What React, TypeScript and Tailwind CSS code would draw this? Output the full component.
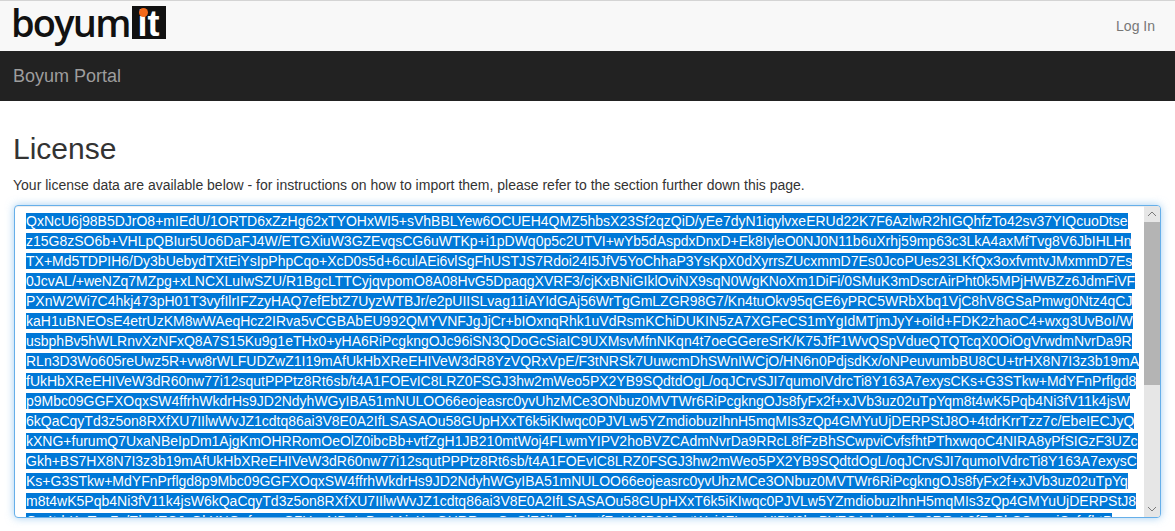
const lines = [
  "QxNcU6j98B5DJrO8+mIEdU/1ORTD6xZzHg62xTYOHxWI5+sVhBBLYew6OCUEH4QMZ5hbsX23Sf2qzQiD/yEe7dyN1iqylvxeERUd22K7F6AzlwR2hIGQhfzTo42sv37YIQcuoDtse",
  "z15G8zSO6b+VHLpQBIur5Uo6DaFJ4W/ETGXiuW3GZEvqsCG6uWTKp+i1pDWq0p5c2UTVI+wYb5dAspdxDnxD+Ek8IyleO0NJ0N11b6uXrhj59mp63c3LkA4axMfTvg8V6JbIHLHn",
  "TX+Md5TDPIH6/Dy3bUebydTXtEiYsIpPhpCqo+XcD0s5d+6culAEi6vlSgFhUSTJS7Rdoi24I5JfV5YoChhaP3YsKpX0dXyrrsZUcxmmD7Es0JcoPUes23LKfQx3oxfvmtvJMxmmD7Es",
  "0JcvAL/+weNZq7MZpg+xLNCXLuIwSZU/R1BgcLTTCyjqvpomO8A08HvG5DpaqgXVRF3/cjKxBNiGIklOviNX9sqN0WgKNoXm1DiFi/0SMuK3mDscrAirPht0k5MPjHWBZz6JdmFiVF",
  "PXnW2Wi7C4hkj473pH01T3vyfIlrIFZzyHAQ7efEbtZ7UyzWTBJr/e2pUIISLvag11iAYIdGAj56WrTgGmLZGR98G7/Kn4tuOkv95qGE6yPRC5WRbXbq1VjC8hV8GSaPmwg0Ntz4qCJ",
  "kaH1uBNEOsE4etrUzKM8wWAeqHcz2IRva5vCGBAbEU992QMYVNFJgJjCr+bIOxnqRhk1uVdRsmKChiDUKIN5zA7XGFeCS1mYgIdMTjmJyY+oiId+FDK2zhaoC4+wxg3UvBoI/W",
  "usbphBv5hWLRnvXzNFxQ8A7S15Ku9g1eTHx0+yHA6RiPcgkngOJc96iSN3QDoGcSiaIC9UXMsvMfnNKqn4t7oeGGereSrK/K75JfF1WvQSpVdueQTQTcqX0OiOgVrwdmNvrDa9R",
  "RLn3D3Wo605reUwz5R+vw8rWLFUDZwZ1I19mAfUkHbXReEHIVeW3dR8YzVQRxVpE/F3tNRSk7UuwcmDhSWnIWCjO/HN6n0PdjsdKx/oNPeuvumbBU8CU+trHX8N7I3z3b19mA",
  "fUkHbXReEHIVeW3dR60nw77i12squtPPPtz8Rt6sb/t4A1FOEvIC8LRZ0FSGJ3hw2mWeo5PX2YB9SQdtdOgL/oqJCrvSJI7qumoIVdrcTi8Y163A7exysCKs+G3STkw+MdYFnPrflgd8",
  "p9Mbc09GGFXOqxSW4ffrhWkdrHs9JD2NdyhWGyIBA51mNULOO66eojeasrc0yvUhzMCe3ONbuz0MVTWr6RiPcgkngOJs8fyFx2f+xJVb3uz02uTpYqm8t4wK5Pqb4Ni3fV11k4jsW",
  "6kQaCqyTd3z5on8RXfXU7IIlwWvJZ1cdtq86ai3V8E0A2IfLSASAOu58GUpHXxT6k5iKIwqc0PJVLw5YZmdiobuzIhnH5mqMIs3zQp4GMYuUjDERPStJ8O+4tdrKrrTzz7c/EbeIECJyQ",
  "kXNG+furumQ7UxaNBeIpDm1AjgKmOHRRomOeOlZ0ibcBb+vtfZgH1JB210mtWoj4FLwmYIPV2hoBVZCAdmNvrDa9RRcL8fFzBhSCwpviCvfsfhtPThxwqoC4NIRA8yPfSIGzF3UZc",
  "Gkh+BS7HX8N7I3z3b19mAfUkHbXReEHIVeW3dR60nw77i12squtPPPtz8Rt6sb/t4A1FOEvIC8LRZ0FSGJ3hw2mWeo5PX2YB9SQdtdOgL/oqJCrvSJI7qumoIVdrcTi8Y163A7exysC",
  "Ks+G3STkw+MdYFnPrflgd8p9Mbc09GGFXOqxSW4ffrhWkdrHs9JD2NdyhWGyIBA51mNULOO66eojeasrc0yvUhzMCe3ONbuz0MVTWr6RiPcgkngOJs8fyFx2f+xJVb3uz02uTpYq",
  "m8t4wK5Pqb4Ni3fV11k4jsW6kQaCqyTd3z5on8RXfXU7IIlwWvJZ1cdtq86ai3V8E0A2IfLSASAOu58GUpHXxT6k5iKIwqc0PJVLw5YZmdiobuzIhnH5mqMIs3zQp4GMYuUjDERPStJ8",
  "O+4tdrKrrTzz7c/EbeIECJyQkXNG+furumQ7UxaNBeIpDm1AjgKmOHRRomOeOlZ0ibcBb+vtfZgH1JB210mtWoj4FLwmYIPV2hoBVZCAdmNvrDa9RRcL8fFzBhSCwpviCvfsfhtP",
];

export default function App() {
  return (
    <div className="h-[531px] overflow-hidden bg-white font-['Liberation_Sans',Arial,sans-serif] text-[14px] text-[#333]">
      <header className="flex h-[51px] items-start justify-between border-t border-[#d4d4d4] bg-[#f8f8f8] pl-[11px] pr-[20px]">
        <div className="flex items-start">
          <span className="-mt-px font-['Open_Sans',sans-serif] text-[38px] font-semibold leading-[44px] tracking-[-1.8px] text-[#111]">boyum</span>
          <span className="relative ml-[2px] mt-[5px] flex h-[33px] w-[34px] justify-center bg-[#111] pt-[3px] text-[36px] font-bold leading-[30px] text-white">
            it
            <span className="absolute left-[7px] top-[2px] h-[9px] w-[9px] rounded-full bg-[#f26a1b]" />
          </span>
        </div>
        <a className="pt-[15px] text-[#777]">Log In</a>
      </header>

      <div className="flex h-[50px] items-center bg-[#222] pl-[13px] text-[18px] text-[#9d9d9d]">Boyum Portal</div>

      <main className="px-[14px]">
        <h1 className="mt-[28px] -ml-px text-[30px] font-medium leading-[39px]">License</h1>
        <p className="mt-[7px] -ml-px leading-[20px]">
          Your license data are available below - for instructions on how to import them, please refer to the section further down this page.
        </p>
        <div className="mt-[10px] flex h-[313px] overflow-hidden rounded-[4px] border border-[#66afe9] bg-white shadow-[inset_0_1px_1px_rgba(0,0,0,0.075),0_0_8px_rgba(102,175,233,0.6)]">
          <div className="min-w-0 flex-1 overflow-hidden pl-[11px] pt-[5px] leading-[20px] whitespace-nowrap">
            {lines.map((line) => (
              <div key={line}>
                <span className="bg-[#0078d7] text-white">{line}</span>
              </div>
            ))}
          </div>
          <div className="flex w-[16px] shrink-0 flex-col bg-[#e6e6e6]">
            <div className="flex h-[16px] items-center justify-center">
              <svg width="10" height="6" viewBox="0 0 10 6" fill="none" stroke="#7a7a7a" strokeWidth="1"><path d="M1 5 5 1l4 4" /></svg>
            </div>
            <div className="h-[163px] bg-[#b4b4b4]" />
            <div className="flex-1" />
            <div className="flex h-[16px] items-center justify-center">
              <svg width="10" height="6" viewBox="0 0 10 6" fill="none" stroke="#7a7a7a" strokeWidth="1"><path d="M1 1l4 4 4-4" /></svg>
            </div>
          </div>
        </div>
      </main>
    </div>
  );
}
